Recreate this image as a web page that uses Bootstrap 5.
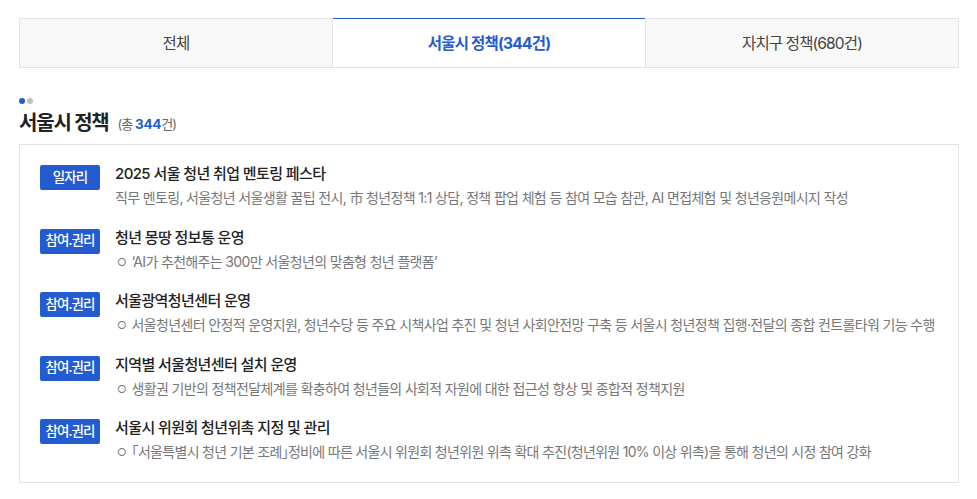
<!DOCTYPE html>
<html lang="ko">
<head>
<meta charset="utf-8">
<title>서울시 정책</title>
<link rel="stylesheet" href="https://cdn.jsdelivr.net/npm/bootstrap@5.3.0/dist/css/bootstrap.min.css">
<style>
html,body{height:499px;overflow:hidden}
body{font-family:Inter,"Noto Sans CJK KR","Noto Sans",sans-serif;background:#fff;color:#222;padding:18px 18px 0 19px}
.tabset{height:50px}
.tabitem{flex:1 1 0;display:flex;align-items:center;justify-content:center;background:#f8f8f8;border:1px solid #e3e3e3;font-size:15.5px;letter-spacing:-.85px;color:#444;text-decoration:none;padding-top:2px}
.tabitem.tabon{background:#fff;color:#235bd1;font-weight:700;letter-spacing:-.78px;border-top:1px solid #235bd1;border-left:0;border-right:0}
.dotrow{margin-top:30px;height:6px;gap:2px}
.dotrow i{display:block;width:6px;height:6px;border-radius:50%;background:#c0c0c0}
.dotrow i:first-child{background:#235bd1}
.headrow{margin-top:4px;height:28px;align-items:center}
.headrow h2{font-size:20px;font-weight:700;letter-spacing:-1.2px;margin:0;color:#222;line-height:28px;padding-top:1px}
.headcount{font-size:13px;color:#666;margin-left:9px;letter-spacing:-1px;padding-top:4px}
.headcount b{color:#235bd1;font-weight:700;font-size:13.5px;letter-spacing:-.2px}
.policybox{margin-top:8px;height:339px;border:1px solid #e3e3e3;padding:20px 20px 0;background:#fff}
.policyrow{height:63.5px}
.catchip{flex:0 0 60px;width:60px;height:25px;background:#235bd1;color:#fff;border-radius:2px;font-size:13.5px;font-weight:500;letter-spacing:-1px;display:flex;align-items:center;justify-content:center;line-height:1;margin-right:15px}
.policytitle{font-size:15px;font-weight:500;letter-spacing:-.6px;color:#222;line-height:19px;margin:-1px 0 5px;white-space:nowrap}
.policydesc{font-size:14px;letter-spacing:-.65px;color:#777;line-height:19px;margin:0;white-space:nowrap}
.policydesc.tightdesc{letter-spacing:-.7px}
.ringmark{font-size:10.5px;margin:0 5px 0 2px;letter-spacing:0;font-weight:400;vertical-align:1px}
.halfmark{font-feature-settings:"halt"}
</style>
</head>
<body>
<div class="d-flex tabset">
  <a class="tabitem" href="#">전체</a>
  <a class="tabitem tabon" href="#">서울시 정책(344건)</a>
  <a class="tabitem" href="#">자치구 정책(680건)</a>
</div>
<div class="d-flex dotrow"><i></i><i></i></div>
<div class="d-flex headrow">
  <h2>서울시 정책</h2>
  <span class="headcount">(총 <b>344</b>건)</span>
</div>
<div class="policybox">
  <div class="d-flex policyrow">
    <span class="catchip">일자리</span>
    <div><p class="policytitle">2025 서울 청년 취업 멘토링 페스타</p>
    <p class="policydesc">직무 멘토링, 서울청년 서울생활 꿀팁 전시, 市 청년정책 1:1 상담, 정책 팝업 체험 등 참여 모습 참관, AI 면접체험 및 청년응원메시지 작성</p></div>
  </div>
  <div class="d-flex policyrow">
    <span class="catchip">참여.권리</span>
    <div><p class="policytitle">청년 몽땅 정보통 운영</p>
    <p class="policydesc"><span class="ringmark">○</span>‘AI가 추천해주는 300만 서울청년의 맞춤형 청년 플랫폼’</p></div>
  </div>
  <div class="d-flex policyrow">
    <span class="catchip">참여.권리</span>
    <div><p class="policytitle">서울광역청년센터 운영</p>
    <p class="policydesc"><span class="ringmark">○</span>서울청년센터 안정적 운영지원, 청년수당 등 주요 시책사업 추진 및 청년 사회안전망 구축 등 서울시 청년정책 집행·전달의 종합 컨트롤타워 기능 수행</p></div>
  </div>
  <div class="d-flex policyrow">
    <span class="catchip">참여.권리</span>
    <div><p class="policytitle">지역별 서울청년센터 설치 운영</p>
    <p class="policydesc"><span class="ringmark">○</span>생활권 기반의 정책전달체계를 확충하여 청년들의 사회적 자원에 대한 접근성 향상 및 종합적 정책지원</p></div>
  </div>
  <div class="d-flex policyrow">
    <span class="catchip">참여.권리</span>
    <div><p class="policytitle">서울시 위원회 청년위촉 지정 및 관리</p>
    <p class="policydesc tightdesc"><span class="ringmark">○</span><span class="halfmark">「</span>서울특별시 청년 기본 조례<span class="halfmark">」</span>정비에 따른 서울시 위원회 청년위원 위촉 확대 추진(청년위원 10% 이상 위촉)을 통해 청년의 시정 참여 강화</p></div>
  </div>
</div>
<script src="https://cdn.jsdelivr.net/npm/bootstrap@5.3.0/dist/js/bootstrap.bundle.min.js"></script>
</body>
</html>
